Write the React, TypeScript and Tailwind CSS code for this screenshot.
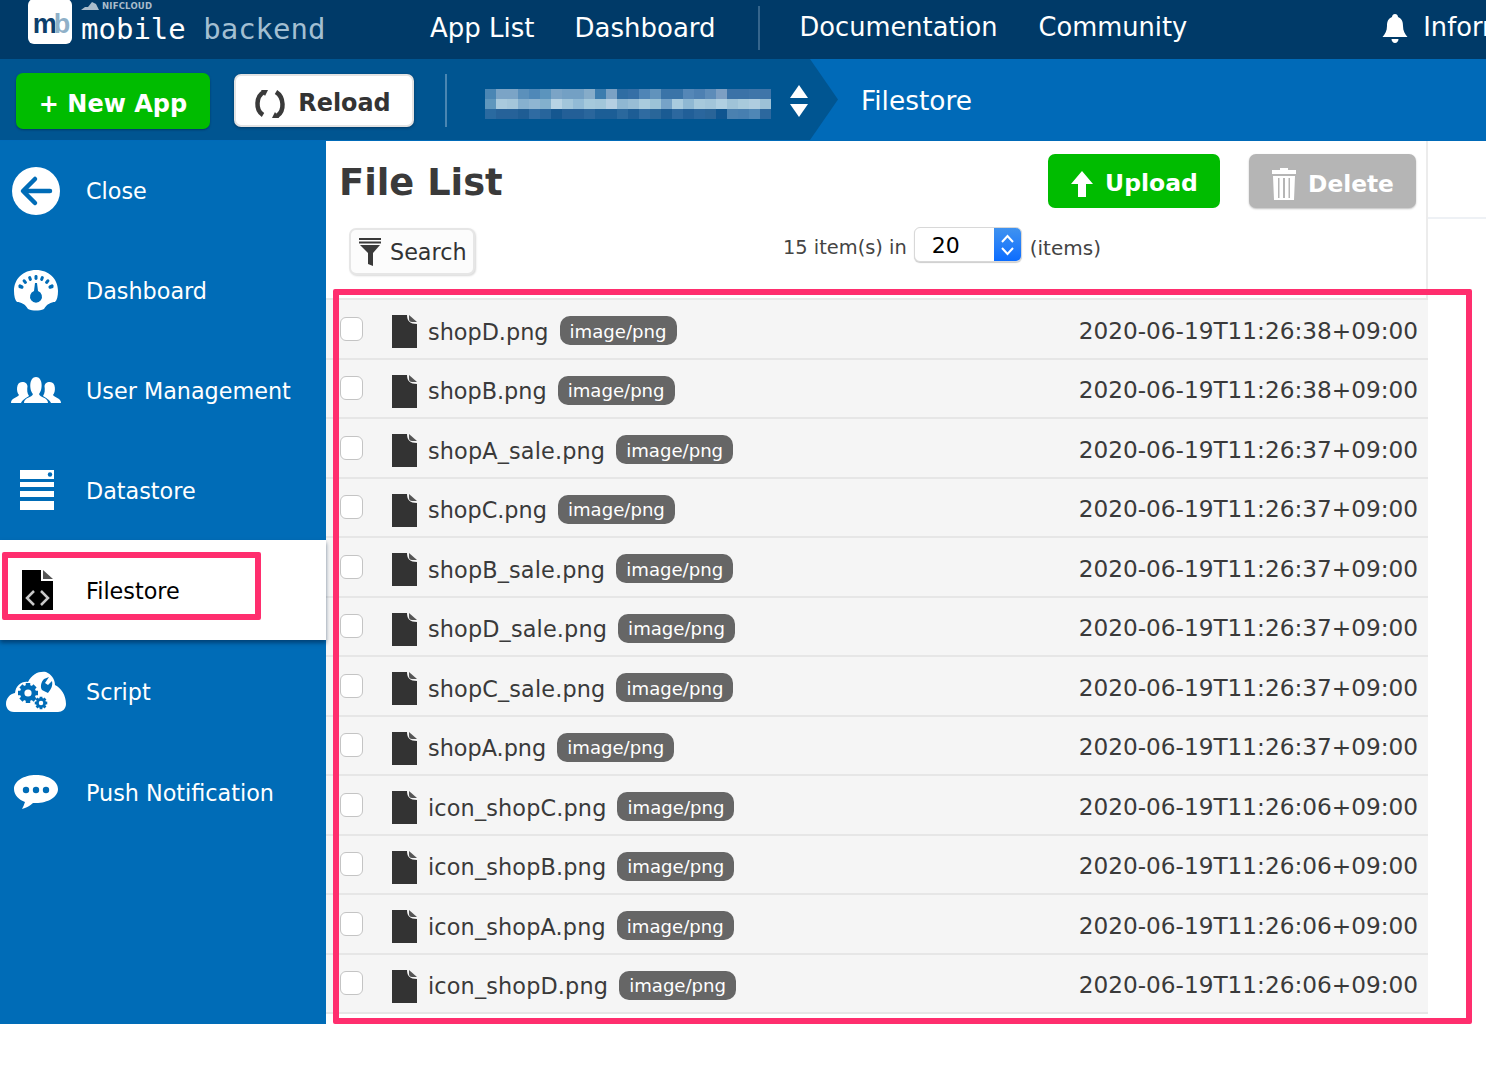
import React from "react";

const FONT = "font-['DejaVu_Sans','Liberation_Sans',sans-serif]";

const rows = [
  ["shopD.png", "2020-06-19T11:26:38+09:00"],
  ["shopB.png", "2020-06-19T11:26:38+09:00"],
  ["shopA_sale.png", "2020-06-19T11:26:37+09:00"],
  ["shopC.png", "2020-06-19T11:26:37+09:00"],
  ["shopB_sale.png", "2020-06-19T11:26:37+09:00"],
  ["shopD_sale.png", "2020-06-19T11:26:37+09:00"],
  ["shopC_sale.png", "2020-06-19T11:26:37+09:00"],
  ["shopA.png", "2020-06-19T11:26:37+09:00"],
  ["icon_shopC.png", "2020-06-19T11:26:06+09:00"],
  ["icon_shopB.png", "2020-06-19T11:26:06+09:00"],
  ["icon_shopA.png", "2020-06-19T11:26:06+09:00"],
  ["icon_shopD.png", "2020-06-19T11:26:06+09:00"],
];

const mosaic = [
  ["#4a86b4","#7ba4c6","#7ba4c6","#5b90bb","#4f88b8","#5b94bd","#7ba4c6","#73a0c4","#73a0c4","#86acc9","#3c7cae","#7ba1c4","#2f6da3","#356fa6","#4f85b6","#6193bc","#3a74a8","#3a74a8","#5587b7","#4d80b2","#5d8cb9","#7d9fc3","#3b72a7","#3b72a7","#3f75a9","#3f75a9"],
  ["#5f97bd","#a9cadd","#a4c6da","#86b0cf","#8fb5d2","#82b0cd","#b7d3e4","#a2c6db","#92bbd6","#a5c9dc","#a2c6da","#b5cfe2","#8fb7d2","#98bdd5","#a9cbdd","#9bc3d7","#76a3c8","#a9cbde","#8fb8d3","#a7c9dc","#a2c5da","#b0cfe1","#9fc3d8","#a8cadc","#afcde0","#9cc1d7"],
  ["#2a6aa0","#266299","#266299","#1f5d94","#2f6ba2","#27659c","#155790","#235f97","#235f97","#2a669c","#1c5e96","#1c5e96","#2a689d","#1d5d95","#2f6ba1","#296699","#1a5b93","#2c689f","#215f98","#2a669d","#296498","#0f5590","#4a81b0","#477fb0","#4f87b6","#2c689e"],
];

function Logo() {
  return (
    <div className="flex items-start">
      <div className="ml-[28px] mt-[-1px] flex h-[45px] w-[44px] items-center justify-center rounded-[6px] bg-white">
        <span className="mt-[5px] text-[27px] font-bold leading-none tracking-[-3px] font-['Liberation_Sans',sans-serif]">
          <span className="text-[#0d3e6b]">m</span>
          <span className="text-[#8fb0c8]">b</span>
        </span>
      </div>
      <div className="ml-[9px] flex flex-col">
        <div className="flex h-[12px] items-center gap-[3px]">
          <svg width="18" height="8" viewBox="0 0 18 8">
            <path d="M0 8 L4 5 L7 5 L11 0 L15 2 L18 8 Z" fill="#a9bccb" />
          </svg>
          <span className="text-[8.5px] font-bold leading-none tracking-[0.2px] text-[#a9bccb]">NIFCLOUD</span>
        </div>
        <div className="whitespace-nowrap text-[29px] leading-[34px] font-['DejaVu_Sans_Mono','DejaVu_Sans',monospace]">
          <span className="text-white">mobile </span>
          <span className="text-[#a3bfd2]">backend</span>
        </div>
      </div>
    </div>
  );
}

function Refresh() {
  return (
    <svg width="34" height="30" viewBox="0 0 34 30" fill="none" stroke="#3a3a3a" strokeWidth="4.5" className="ml-[-4px]">
      <path d="M11 3 C3 7 2 21 10 26" />
      <path d="M23 3 C31 8 32 22 24 27" />
      <path d="M8 1 L15 1 L12 7 Z" fill="#3a3a3a" stroke="none" />
      <path d="M26 29 L19 29 L22 23 Z" fill="#3a3a3a" stroke="none" />
    </svg>
  );
}

function FileIcon() {
  return (
    <svg width="25" height="33" viewBox="0 0 25 33" className="shrink-0">
      <path d="M0 0 H15 C15 6 18 9 25 9 V33 H0 Z" fill="#333" />
      <path d="M17 0 L25 7 H20 C18 7 17 6 17 4 Z" fill="#555" />
    </svg>
  );
}

function CloseIcon() {
  return (
    <svg width="50" height="50" viewBox="0 0 50 50">
      <circle cx="25" cy="25" r="24" fill="#fff" />
      <path d="M39 25 H13 M24 13 L12 25 L24 37" fill="none" stroke="#006cb7" strokeWidth="4.5" strokeLinecap="round" strokeLinejoin="round" />
    </svg>
  );
}

function DashIcon() {
  const ticks = [-60, -40, -20, 0, 20, 40, 60];
  return (
    <svg width="46" height="42" viewBox="0 0 46 42">
      <path d="M23 1 C10 1 1 10 1 22 C1 27 2 31 4 33 C8 33 12 35 15 40 C20 42 26 42 31 40 C34 35 38 33 42 33 C44 31 45 27 45 22 C45 10 36 1 23 1 Z" fill="#fff" />
      {ticks.map((t) => (
        <rect key={t} x="21.5" y="6" width="3" height="5" rx="1.4" fill="#006cb7" transform={`rotate(${t} 23 26)`} />
      ))}
      <rect x="6" y="16" width="3" height="5" rx="1.4" fill="#006cb7" transform="rotate(-80 7.5 18)" />
      <rect x="37" y="16" width="3" height="5" rx="1.4" fill="#006cb7" transform="rotate(80 38.5 18)" />
      <path d="M22 14 H24 L25 22 A6 6 0 1 1 21 22 Z" fill="#006cb7" />
    </svg>
  );
}

function UsersIcon() {
  return (
    <svg width="50" height="27" viewBox="0 0 50 27" fill="#fff">
      <path d="M0 26 C0 21 6 21 8 18 C5 15 5 5 11 5 C15 5 16 7 16.500 9 C16 13 16 16 18 19 C15 21 11 23 10 26 Z" />
      <path d="M50 26 C50 21 44 21 42 18 C45 15 45 5 39 5 C35 5 34 7 33.500 9 C34 13 34 16 32 19 C35 21 39 23 40 26 Z" />
      <path d="M13 26 C13 20 21 21 22 17 C18 13 18 0 25 0 C32 0 32 13 28 17 C29 21 37 20 37 26 Z" />
    </svg>
  );
}

function DataIcon() {
  return (
    <svg width="34" height="40" viewBox="0 0 34 40" className="ml-[2px]">
      <path d="M0 0 H34 V9 H0 Z" fill="#fff" />
      <circle cx="30" cy="4.500" r="2.200" fill="#006cb7" />
      <rect y="12" width="34" height="5" fill="#fff" />
      <rect y="21" width="34" height="6" fill="#fff" />
      <rect y="31" width="34" height="9" fill="#fff" />
    </svg>
  );
}

function FileCodeIcon() {
  return (
    <svg width="31" height="40" viewBox="0 0 31 40" className="ml-[2px]">
      <path d="M0 0 H19 V11 H31 V40 H0 Z" fill="#000" />
      <path d="M21 0 L31 9 H21 Z" fill="#555" />
      <path d="M12 21 L5 28 L12 35 M19 21 L26 28 L19 35" fill="none" stroke="#c9c9c9" strokeWidth="2.500" />
    </svg>
  );
}

function Gear({ cx, cy, r }: { cx: number; cy: number; r: number }) {
  const spokes = [0, 45, 90, 135];
  return (
    <g>
      {spokes.map((a) => (
        <rect key={a} x={cx - r * 0.28} y={cy - r * 1.25} width={r * 0.56} height={r * 2.5} fill="#006cb7" transform={`rotate(${a} ${cx} ${cy})`} />
      ))}
      <circle cx={cx} cy={cy} r={r} fill="#006cb7" />
      <circle cx={cx} cy={cy} r={r * 0.45} fill="#fff" />
    </g>
  );
}

function ScriptIcon() {
  return (
    <svg width="60" height="42" viewBox="0 0 60 42">
      <path d="M8 41 C2 41 0 36 0 33 C0 27 4 23 9 22 C10 14 16 10 22 11 C26 3 33 0 40 1 C45 3 49 8 49 14 C55 17 60 24 60 33 C60 38 56 41 52 41 Z" fill="#fff" />
      <Gear cx={22} cy={22} r={8} />
      <Gear cx={35} cy={32} r={5} />
      <path d="M38 8 C35 11 34 16 36 19 L42 22 C45 18 47 15 46 10 L42 14 L39 12 L43 6 Z" fill="#006cb7" />
    </svg>
  );
}

function PushIcon() {
  return (
    <svg width="44" height="34" viewBox="0 0 44 34">
      <path d="M22 0 C10 0 0 6 0 14 C0 20 5 25 11 27 C10 30 9 32 8 34 C12 33 16 31 19 28 C20 28 21 28 22 28 C34 28 44 22 44 14 C44 6 34 0 22 0 Z" fill="#fff" />
      <circle cx="12" cy="15" r="3.200" fill="#006cb7" />
      <circle cx="22" cy="15" r="3.200" fill="#006cb7" />
      <circle cx="32" cy="15" r="3.200" fill="#006cb7" />
    </svg>
  );
}

function NavItem({ icon, label, className, active }: { icon: React.ReactNode; label: string; className: string; active?: boolean }) {
  return (
    <div className={`flex items-center ${className} ${active ? "relative z-10 bg-white text-black shadow-[0_3px_4px_rgba(0,35,70,0.55)]" : "text-white"}`}>
      <div className="flex w-[72px] shrink-0 justify-center">{icon}</div>
      <span className="ml-[14px] mt-[2px] text-[22.3px] leading-none">{label}</span>
    </div>
  );
}

export default function App() {
  return (
    <div className={`relative h-[1066px] w-full overflow-hidden bg-white ${FONT}`}>
      {/* top bar */}
      <header className="flex h-[59px] items-start bg-[#003a68]">
        <div className="w-[430px] shrink-0">
          <Logo />
        </div>
        <nav className="flex h-[59px] flex-1 items-center whitespace-nowrap pb-[3px] text-[25.7px] leading-none text-white">
          <span className="text-[26px]">App List</span>
          <span className="ml-[40px] text-[26px]">Dashboard</span>
          <span className="ml-[42px] h-[44px] w-[2px] bg-[#35658c]" />
          <span className="ml-[40px]">Documentation</span>
          <span className="ml-[41px]">Community</span>
          <svg className="ml-[195px] shrink-0" width="26" height="30" viewBox="0 0 26 30" fill="#fff">
            <path d="M13 1 C15 1 16 2.500 16 4 C20 5.500 21 9 21 13 C21 18 23 21 25.500 24 H0.500 C3 21 5 18 5 13 C5 9 6 5.500 10 4 C10 2.500 11 1 13 1 Z" />
            <path d="M9.500 26 H16.500 C16.500 28 15 30 13 30 C11 30 9.500 28 9.500 26 Z" />
          </svg>
          <span className="ml-[15px]">Information</span>
        </nav>
      </header>

      {/* action bar */}
      <div className="flex h-[82px] items-stretch bg-[#006ab8]">
        <div className="mb-[1px] flex w-[810px] shrink-0 items-center bg-[#005591] pb-[1px]">
          <button className="ml-[16px] mt-[3px] flex h-[56px] w-[194px] items-center justify-center rounded-[7px] bg-[#00bc00] pt-[6px] text-[24px] font-bold leading-none text-white shadow-[0_1px_2px_rgba(0,30,60,0.5)]">
            + New App
          </button>
          <button className="ml-[24px] mt-[2px] flex h-[53px] w-[180px] items-center justify-center gap-[11px] rounded-[7px] border-2 border-[#e3e3e3] bg-white pt-[8px] text-[23.9px] font-bold leading-none text-[#333] shadow-[0_1px_3px_rgba(0,30,60,0.5)]">
            <Refresh />
            Reload
          </button>
          <span className="ml-[31px] mt-[2px] h-[53px] w-[2px] bg-[#4a86b2]" />
          <div className="ml-[38px] mt-[10px] flex h-[30px] w-[286px] flex-col">
            {mosaic.map((line, i) => (
              <div key={i} className="flex flex-1">
                {line.map((c, j) => (
                  <span key={j} className="flex-1" style={{ backgroundColor: c }} />
                ))}
              </div>
            ))}
          </div>
          <svg className="ml-[18px] mt-[4px] shrink-0" width="20" height="32" viewBox="0 0 20 32" fill="#fff">
            <path d="M10 0 L19 13 H1 Z" />
            <path d="M1 19 H19 L10 32 Z" />
          </svg>
        </div>
        <div className="mb-[1px] w-[28px] shrink-0 bg-[#005591] [clip-path:polygon(0_0,100%_50%,0_100%)]" />
        <div className="ml-[23px] flex items-center pt-[2px] text-[26.4px] leading-none text-white">Filestore</div>
      </div>

      <div className="flex items-start">
        {/* sidebar */}
        <aside className="h-[883px] w-[326px] shrink-0 bg-[#006cb7]">
          <NavItem className="h-[99px]" icon={<CloseIcon />} label="Close" />
          <NavItem className="h-[100px]" icon={<DashIcon />} label="Dashboard" />
          <NavItem className="h-[100px]" icon={<UsersIcon />} label="User Management" />
          <NavItem className="h-[100px]" icon={<DataIcon />} label="Datastore" />
          <NavItem className="h-[100px]" active icon={<FileCodeIcon />} label="Filestore" />
          <NavItem className="h-[103px]" icon={<ScriptIcon />} label="Script" />
          <NavItem className="h-[98px]" icon={<PushIcon />} label="Push Notification" />
        </aside>

        {/* main column */}
        <main className="w-[1102px] shrink-0">
          <div className="h-[157px] border-r-2 border-[#ececec] pr-[10px]">
            <div className="flex items-start pt-[13px]">
              <h1 className="ml-[13px] mt-[2px] text-[36.8px] font-bold leading-[54px] text-[#3a3a3a]">File List</h1>
              <button className="ml-auto flex h-[54px] w-[172px] items-center justify-center gap-[11px] rounded-[7px] bg-[#00bc00] pt-[5px] text-[23.5px] font-bold leading-none text-white">
                <svg width="24" height="26" viewBox="0 0 24 26" fill="#fff">
                  <path d="M12 0 L23 13 H16 V26 H8 V13 H1 Z" />
                </svg>
                Upload
              </button>
              <button className="ml-[29px] flex h-[54px] w-[167px] items-center justify-center gap-[11px] rounded-[7px] bg-[#b5b5b5] pt-[5px] text-[23.3px] font-bold leading-none text-white shadow-[0_1px_2px_rgba(0,0,0,0.25)]">
                <svg width="26" height="32" viewBox="0 0 26 32" fill="#fff">
                  <path d="M9 0 H17 V2 H25 V6 H1 V2 H9 Z" />
                  <path d="M2 8 H24 L23 32 H3 Z M7 10 V30 H8.500 V10 Z M12 10 V30 H14 V10 Z M17.500 10 V30 H19 V10 Z" fillRule="evenodd" />
                </svg>
                Delete
              </button>
            </div>
            <div className="mt-[18px] flex items-start">
              <button className="ml-[23px] flex h-[47px] w-[126px] items-center gap-[8px] rounded-[7px] border-2 border-[#e6e6e6] bg-[#fcfcfc] pl-[7px] text-[22.3px] text-[#333] shadow-[1px_1px_2px_rgba(0,0,0,0.15)]">
                <svg width="24" height="28" viewBox="0 0 24 28" fill="#3a3a3a">
                  <path d="M1 0 H23 V2 H1 Z" />
                  <path d="M1 3.500 H23 V5.500 H1 Z" />
                  <path d="M2 7 H22 L15 15 V28 L10 26 V15 Z" />
                </svg>
                <span className="mt-[2px]">Search</span>
              </button>
              <div className="ml-[308px] mt-[-1px] flex h-[35px] items-center whitespace-nowrap text-[#444]">
                <span className="pt-[7px] text-[19.4px]">15 item(s) in</span>
                <div className="ml-[7px] flex h-[35px] w-[108px] overflow-hidden rounded-[6px] border border-[#d8d8d8] bg-white shadow-[0_1px_1px_rgba(0,0,0,0.2)]">
                  <span className="flex-1 pl-[17px] text-[22px] leading-[36px] text-black">20</span>
                  <span className="flex w-[27px] items-center justify-center bg-gradient-to-b from-[#3f92ef] to-[#0a6cff]">
                    <svg width="15" height="24" viewBox="0 0 15 24" fill="none" stroke="#fff" strokeWidth="2">
                      <path d="M2 9 L7.500 3 L13 9" />
                      <path d="M2 15 L7.500 21 L13 15" />
                    </svg>
                  </span>
                </div>
                <span className="ml-[8px] pt-[7px] text-[20px]">(items)</span>
              </div>
            </div>
          </div>

          <div className="border-t-2 border-[#e8e8e8]">
            {rows.map(([name, date]) => (
              <div key={name} className="flex h-[59.5px] items-center border-b-2 border-[#e6e6e6] bg-[#f5f5f5] pl-[14px] pr-[10px] text-[#3a3a3a]">
                <span className="h-[24px] w-[23px] shrink-0 rounded-[6px] border border-[#c4c4c4] bg-white" />
                <span className="ml-[29px] mt-[6px] flex">
                  <FileIcon />
                </span>
                <span className={`ml-[11px] mt-[6px] text-[22.35px] leading-none ${name.includes("_") ? "tracking-[0.15px]" : ""}`}>{name}</span>
                <span className="ml-[11px] mt-[4px] flex h-[29px] w-[117px] items-center justify-center rounded-[10px] bg-[#666] pt-[2px] text-[18.1px] leading-none text-white">
                  image/png
                </span>
                <span className="ml-auto mt-[3px] text-[23.2px] leading-none">{date}</span>
              </div>
            ))}
          </div>
        </main>

        <div className="h-[78px] flex-1 border-b-2 border-[#eef1f5]" />
      </div>

      {/* annotation overlays */}
      <div className="pointer-events-none absolute left-[2px] top-[552px] z-20 h-[68px] w-[259px] rounded-[2px] border-[6px] border-[#ff2e6e]" />
      <div className="pointer-events-none absolute left-[333px] top-[289px] z-20 h-[735px] w-[1139px] rounded-[2px] border-[6px] border-[#ff2e6e]" />
    </div>
  );
}
